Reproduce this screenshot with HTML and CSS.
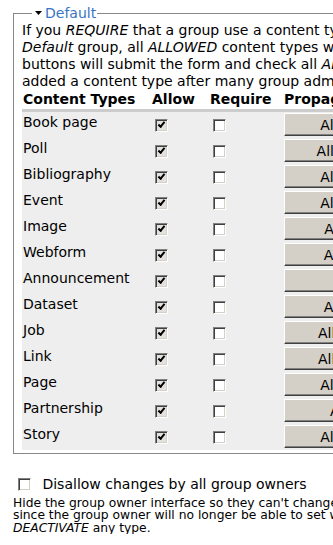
FILE: index.html
```html
<!DOCTYPE html>
<html lang="en">
<head>
    <meta charset="UTF-8">
    <meta name="viewport" content="width=device-width, initial-scale=1.0">
    <title>Content type administration</title>
    <link rel="stylesheet" href="styles.css">
</head>
<body>
    <form class="admin-form">
        <fieldset class="settings">
            <legend class="settings-legend"><svg class="toggle-arrow" width="7" height="4" viewBox="0 0 7 4"><polygon points="0,0 7,0 3.5,4" fill="#000"/></svg><span class="legend-text">Default</span></legend>
            <p class="settings-help">If you <em>REQUIRE</em> that a group use a content type, it will also be <em>ALLOWED</em>. For the<br>
                <em>Default</em> group, all <em>ALLOWED</em> content types will be activated for new groups. The propagate<br>
                buttons will submit the form and check all <em>ALLOWED</em> types in every existing group. Useful if you<br>
                added a content type after many group admins had already set up their groups.</p>

            <table class="types-table">
                <colgroup>
                    <col class="col-name">
                    <col class="col-allow">
                    <col class="col-require">
                    <col class="col-propagate">
                </colgroup>
                <thead>
                    <tr>
                        <th>Content Types</th>
                        <th>Allow</th>
                        <th>Require</th>
                        <th>Propagate</th>
                    </tr>
                </thead>
                <tbody>
                    <tr><td>Book page</td><td><input type="checkbox" checked></td><td><input type="checkbox"></td><td><button type="button" class="propagate">Allow group</button></td></tr>
                    <tr><td>Poll</td><td><input type="checkbox" checked></td><td><input type="checkbox"></td><td><button type="button" class="propagate">Allow groups</button></td></tr>
                    <tr><td>Bibliography</td><td><input type="checkbox" checked></td><td><input type="checkbox"></td><td><button type="button" class="propagate">Allow group</button></td></tr>
                    <tr><td>Event</td><td><input type="checkbox" checked></td><td><input type="checkbox"></td><td><button type="button" class="propagate">Allow group</button></td></tr>
                    <tr><td>Image</td><td><input type="checkbox" checked></td><td><input type="checkbox"></td><td><button type="button" class="propagate">Allow sites</button></td></tr>
                    <tr><td>Webform</td><td><input type="checkbox" checked></td><td><input type="checkbox"></td><td><button type="button" class="propagate">Allow in all</button></td></tr>
                    <tr><td>Announcement</td><td><input type="checkbox" checked></td><td><input type="checkbox"></td><td><button type="button" class="propagate">All old</button></td></tr>
                    <tr><td>Dataset</td><td><input type="checkbox" checked></td><td><input type="checkbox"></td><td><button type="button" class="propagate">Allow in all</button></td></tr>
                    <tr><td>Job</td><td><input type="checkbox" checked></td><td><input type="checkbox"></td><td><button type="button" class="propagate">All in groups</button></td></tr>
                    <tr><td>Link</td><td><input type="checkbox" checked></td><td><input type="checkbox"></td><td><button type="button" class="propagate">All in groups</button></td></tr>
                    <tr><td>Page</td><td><input type="checkbox" checked></td><td><input type="checkbox"></td><td><button type="button" class="propagate">Allow group</button></td></tr>
                    <tr><td>Partnership</td><td><input type="checkbox" checked></td><td><input type="checkbox"></td><td><button type="button" class="propagate">Allow old</button></td></tr>
                    <tr><td>Story</td><td><input type="checkbox" checked></td><td><input type="checkbox"></td><td><button type="button" class="propagate">Allow group</button></td></tr>
                </tbody>
            </table>
        </fieldset>

        <div class="form-item">
            <label class="option"><input type="checkbox"> Disallow changes by all group owners</label>
            <div class="description">Hide the group owner interface so they can't change the content types of their own groups. Use this<br>
                since the group owner will no longer be able to set which types are active, nor <em>ACTIVATE</em> or<br>
                <em>DEACTIVATE</em> any type.</div>
        </div>
    </form>
</body>
</html>
```

FILE: styles.css
```css
/* Página base */
html, body {
    overflow: hidden;
}
body {
    margin: 0;
    font-family: "DejaVu Sans", Verdana, sans-serif;
    font-size: 14px;
    line-height: 17px;
    color: #000;
    background: #fff;
}
.admin-form {
    width: 1000px;
    padding: 5px 0 0 13px;
}

/* Fieldset "Default" */
.settings {
    margin: 0;
    padding: 0 8px 3px;
    border: 1px solid #888;
}
.settings-legend {
    margin-left: 10px;
    padding: 0 1px 0 3px;
    line-height: 17px;
}
.toggle-arrow {
    vertical-align: middle;
    margin: 0 3px 2px 0;
}
.legend-text {
    color: #3a74c4;
}
.settings-help {
    margin: 0;
}

/* Tabela de tipos */
.types-table {
    border-collapse: collapse;
    table-layout: fixed;
    width: 700px;
}
.col-name { width: 129px; }
.col-allow { width: 58px; }
.col-require { width: 74px; }
.types-table th {
    text-align: left;
    font-weight: bold;
    padding: 1px 1px 1px;
    border-bottom: 3px solid #ccc;
    background: #fff;
}
.types-table td {
    background: #eee;
    vertical-align: top;
    padding: 1px 1px 2px;
    line-height: 17px;
}
.types-table td:first-child {
    padding-top: 2px;
}

/* Checkbox estilo clássico */
input[type="checkbox"] {
    -webkit-appearance: none;
    appearance: none;
    position: relative;
    box-sizing: border-box;
    width: 13px;
    height: 13px;
    margin: 6px 0 0 3px;
    border: 1px solid;
    border-color: #808080 #fff #fff #808080;
    box-shadow: inset 1px 1px #404040, inset -1px -1px #d4d0c8;
    background: #fff;
    vertical-align: top;
}
input[type="checkbox"]:checked {
    background: #e4e2de;
}
input[type="checkbox"]:checked::after {
    content: "";
    position: absolute;
    left: 2px;
    top: 2px;
    width: 5px;
    height: 2px;
    border-left: 2px solid #000;
    border-bottom: 2px solid #000;
    transform: rotate(-50deg);
}

/* Botões de propagação */
.propagate {
    width: 155px;
    height: 23px;
    margin: 0;
    padding: 0;
    font-family: inherit;
    font-size: 14px;
    color: #000;
    text-align: center;
    background: #d4d0c8;
    border: 1px solid;
    border-color: #fff #404040 #404040 #fff;
    box-shadow: inset -1px -1px #808080;
}

/* Opção abaixo do fieldset */
.form-item {
    margin-top: 22px;
}
.option input[type="checkbox"] {
    margin: 0 7px 0 5px;
    vertical-align: -2px;
}
.description {
    font-size: 12.3px;
    line-height: 12.4px;
    margin-top: 4px;
}
```
